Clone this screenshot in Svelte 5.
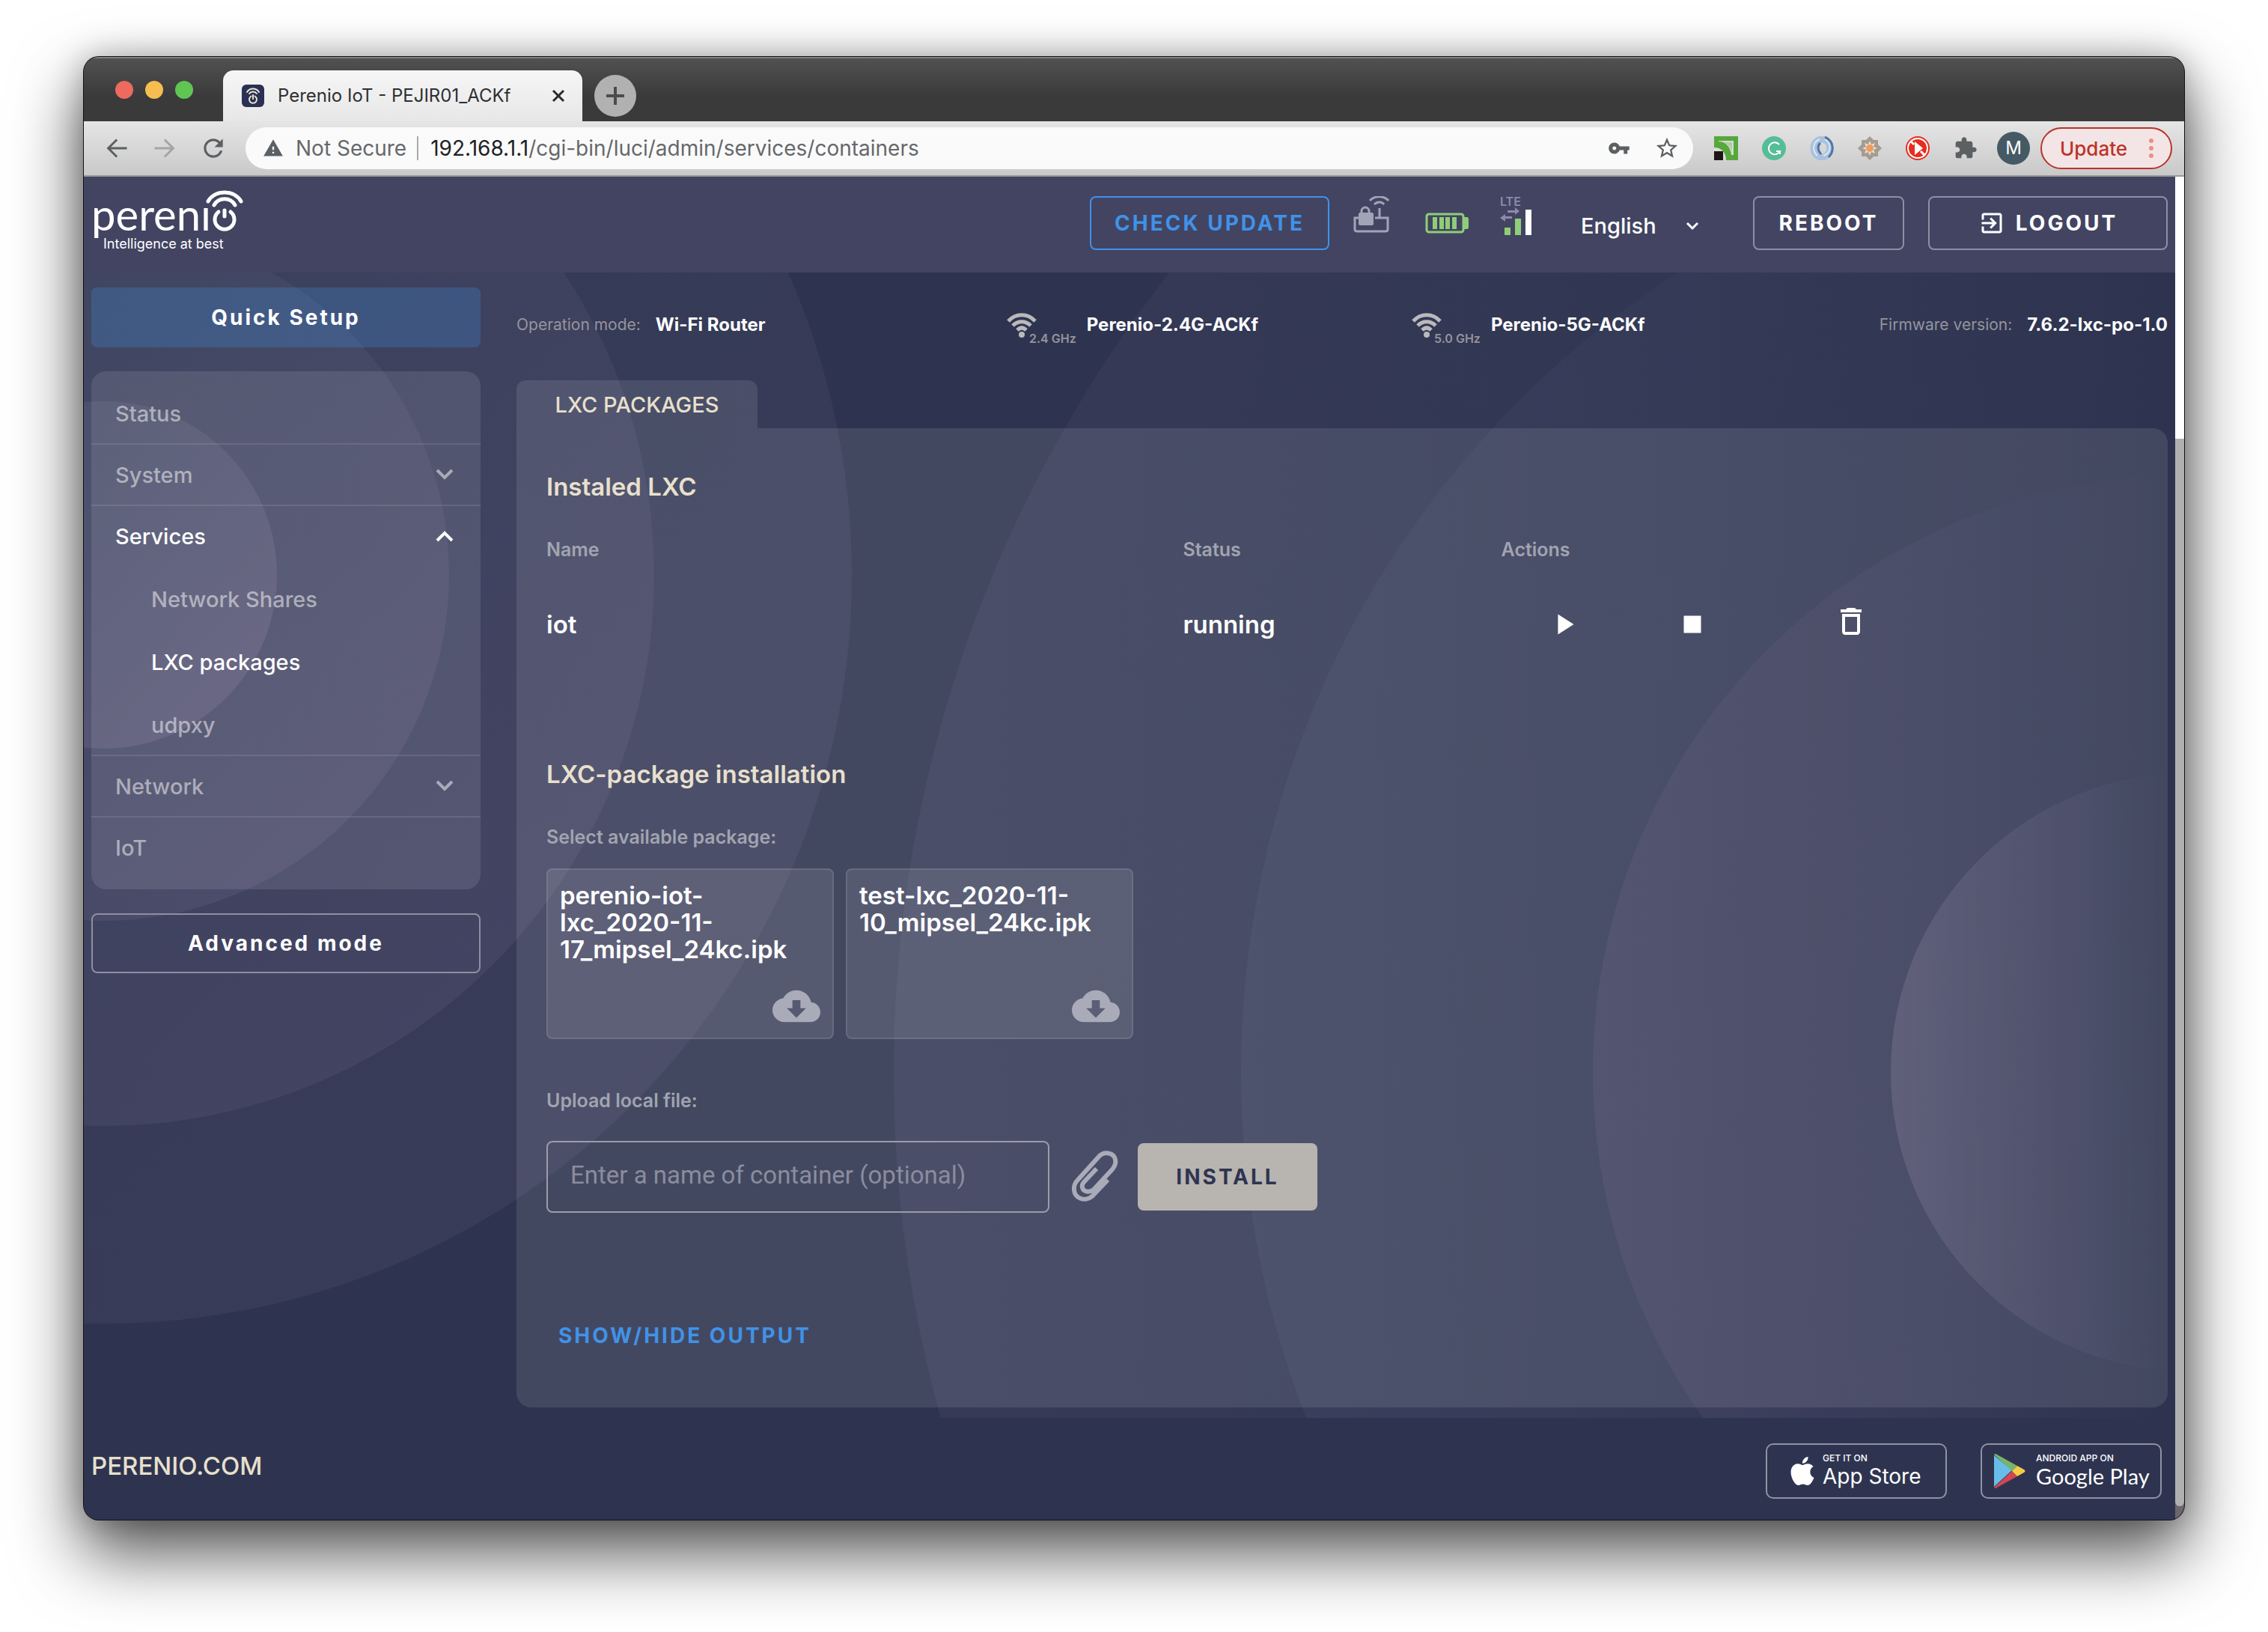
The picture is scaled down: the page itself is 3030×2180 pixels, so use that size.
<script>
  const packages = [
    'perenio-iot-lxc_2020-11-17_mipsel_24kc.ipk',
    'test-lxc_2020-11-10_mipsel_24kc.ipk'
  ];
  const containers = [{ name: 'iot', status: 'running' }];
  const networks = [
    { band: '2.4 GHz', ssid: 'Perenio-2.4G-ACKf' },
    { band: '5.0 GHz', ssid: 'Perenio-5G-ACKf' }
  ];
  const menu = [
    { label: 'Status' },
    { label: 'System', arrow: 'down' },
    {
      label: 'Services',
      arrow: 'up',
      active: true,
      children: [
        { label: 'Network Shares' },
        { label: 'LXC packages', active: true },
        { label: 'udpxy' }
      ]
    },
    { label: 'Network', arrow: 'down' },
    { label: 'IoT' }
  ];
</script>

<div class="window">
  <div class="tabstrip">
    <div class="lights"><i class="red"></i><i class="yellow"></i><i class="green"></i></div>
    <div class="tab">
      <svg class="favicon" viewBox="0 0 30 30" aria-hidden="true">
        <rect width="30" height="30" rx="6" fill="#2a3155" />
        <g fill="none" stroke="#efe6d2" stroke-width="2" stroke-linecap="round">
          <path d="M7 10a9.500 9.500 0 0 1 16 0M10 12a6.200 6.200 0 0 1 10 0M15 14v5" />
          <path d="M12.500 15.500a5 5 0 1 0 5 0" />
        </g>
      </svg>
      <span class="tab-title">Perenio IoT - PEJIR01_ACKf</span>
      <button class="plain tab-close" aria-label="Close tab">
        <svg width="18" height="18" viewBox="0 0 18 18"><path d="M2 2l14 14M16 2L2 16" stroke="#2b2b2e" stroke-width="3" /></svg>
      </button>
    </div>
    <button class="new-tab" aria-label="New tab">
      <svg width="24" height="24" viewBox="0 0 24 24"><path d="M12 0v24M0 12h24" stroke="#4c4c4c" stroke-width="4" /></svg>
    </button>
  </div>

  <div class="toolbar">
    <div class="nav">
      <button class="plain" aria-label="Back"><svg width="36" height="36" viewBox="0 0 24 24" fill="#5c6063"><path d="M21 11H6.800l6-6-1.400-1.400L3 12l8.400 8.400 1.400-1.400-6-6H21z" /></svg></button>
      <button class="plain" aria-label="Forward"><svg width="36" height="36" viewBox="0 0 24 24" fill="#a3a5a6"><path d="M3 11h14.200l-6-6 1.400-1.400L21 12l-8.400 8.400-1.400-1.400 6-6H3z" /></svg></button>
      <button class="plain" aria-label="Reload"><svg width="38" height="38" viewBox="0 0 24 24" fill="#5c6063"><path d="M17.650 6.350C16.200 4.900 14.210 4 12 4c-4.420 0-7.990 3.580-7.990 8s3.570 8 7.990 8c3.730 0 6.840-2.550 7.730-6h-2.080c-.820 2.330-3.040 4-5.650 4-3.310 0-6-2.690-6-6s2.690-6 6-6c1.660 0 3.140.690 4.220 1.780L13 11h7V4l-2.350 2.350z" /></svg></button>
    </div>
    <div class="omnibox">
      <svg width="28" height="28" viewBox="0 0 24 24" fill="#5c6063"><path d="M1 21h22L12 2 1 21zm12-3h-2v-2h2v2zm0-4h-2v-4h2v4z" /></svg>
      <span class="insecure">Not Secure</span>
      <span class="url"><b>192.168.1.1</b>/cgi-bin/luci/admin/services/containers</span>
      <button class="plain" aria-label="Passwords"><svg width="30" height="30" viewBox="0 0 24 24" fill="#5c6063"><path d="M12.650 10C11.830 7.670 9.610 6 7 6c-3.310 0-6 2.690-6 6s2.690 6 6 6c2.610 0 4.830-1.670 5.650-4H17v4h4v-4h2v-4H12.650zM7 14c-1.100 0-2-.9-2-2s.9-2 2-2 2 .9 2 2-.9 2-2 2z" /></svg></button>
      <button class="plain" aria-label="Bookmark"><svg width="34" height="34" viewBox="0 0 24 24" fill="#5c6063"><path d="M22 9.240l-7.190-.620L12 2 9.190 8.630 2 9.240l5.460 4.730L5.820 21 12 17.270 18.180 21l-1.630-7.030L22 9.240zM12 15.400l-3.760 2.270 1-4.280-3.320-2.880 4.380-.380L12 6.100l1.710 4.040 4.380.380-3.320 2.880 1 4.280L12 15.400z" /></svg></button>
    </div>
    <div class="extensions">
      <svg viewBox="0 0 32 32"><path d="M0 0h32v32H0z" fill="#56a83c" /><path d="M6 6h20v19h-3C22 14 15 7 6 7z" fill="#d5dbd1" /><path d="M12 8h12v12C22 14 18 10 12 8z" fill="#b4c9ab" /><path d="M0 15c10 0 16 7 16 17H0z" fill="#dcdcda" /><path d="M0 20h12v12H0z" fill="#1c1714" /></svg>
      <svg viewBox="0 0 32 32"><circle cx="16" cy="16" r="16" fill="#55bd98" /><path d="M23 11a8 8 0 1 0 1 9h-5m5-1v5" fill="none" stroke="#fff" stroke-width="2" /></svg>
      <svg viewBox="0 0 32 32"><ellipse cx="16" cy="16" rx="11" ry="12" fill="none" stroke="#a9c1de" stroke-width="9" /><path d="M20 1c12 5 13 19 5 27M14 9c-5 4-3 11 1 15" fill="none" stroke="#4f77a9" stroke-width="3" /><path d="M20 4C31 11 27 23 18 26M13 4C3 8 3 20 10 26" fill="none" stroke="#dbe7f4" stroke-width="2" /></svg>
      <svg viewBox="0 0 32 32"><path d="M16 0l5 5h6v6l5 5-5 5v6h-6l-5 5-5-5H5v-6l-5-5 5-5V5h6z" fill="#a59c90" /><path d="M16 6l2 5 5-2-2 5 5 2-5 2 2 5-5-2-2 5-2-5-5 2 2-5-5-2 5-2-2-5 5 2z" fill="#e3dfd9" /><circle cx="16" cy="16" r="5" fill="#f29a5c" /></svg>
      <svg viewBox="0 0 32 32"><circle cx="16" cy="16" r="16" fill="#e52d20" /><circle cx="16" cy="16" r="13" fill="none" stroke="#fff" stroke-width="2" /><path d="M7 7l4 4M20 20l5 5" stroke="#fff" stroke-width="3" /><path d="M12 7l11 9-11 9z" fill="#fff" /></svg>
      <svg viewBox="0 0 24 24"><path fill="#5c6063" d="M20.500 11H19V7c0-1.100-.9-2-2-2h-4V3.500C13 2.120 11.880 1 10.500 1S8 2.120 8 3.500V5H4c-1.100 0-1.990.9-1.990 2v3.800H3.500c1.490 0 2.700 1.210 2.700 2.700s-1.210 2.700-2.700 2.700H2V20c0 1.100.9 2 2 2h3.800v-1.500c0-1.490 1.210-2.700 2.700-2.700 1.490 0 2.700 1.210 2.700 2.700V22H17c1.100 0 2-.9 2-2v-4h1.500c1.380 0 2.500-1.120 2.500-2.500S21.880 11 20.500 11z" /></svg>
    </div>
    <button class="avatar" aria-label="Profile M">M</button>
    <button class="update">Update
      <svg width="8" height="28" viewBox="0 0 8 28" fill="#ee8f83"><circle cx="4" cy="4" r="3" /><circle cx="4" cy="14" r="3" /><circle cx="4" cy="24" r="3" /></svg>
    </button>
  </div>

  <div class="viewport">
    <div class="page">
      <header>
        <a class="logo" href="/">
          <span class="brand">
            <span class="wordmark">perenı</span>
            <svg class="power" width="44" height="60" viewBox="0 0 44 60" fill="none" stroke="#fff" stroke-width="5" stroke-linecap="round" aria-hidden="true">
              <path d="M-4 17C5 1 31 1 40 17M4 22C10 11 26 11 32 22" />
              <path d="M10 31a13 13 0 1 0 16 0M18 29v8" />
            </svg>
          </span>
          <span class="tagline">Intelligence at best</span>
        </a>
        <button class="outline check">CHECK UPDATE</button>
        <div class="indicators">
          <svg width="48" height="50" viewBox="0 0 48 50" fill="none" stroke="#a3a3b7" stroke-width="3">
            <path d="M22 6C28-1 41-1 47 6M28 11C32 7 38 7 41 11M35 16v14M7 29H2v15q0 3 3 3h38q3 0 3-3V29H29" />
            <path d="M11 23v-3a5 5 0 0 1 10 0v3" /><rect x="7" y="22" width="20" height="17" rx="2" fill="#a3a3b7" stroke="none" />
          </svg>
          <svg class="battery" width="58" height="28" viewBox="0 0 58 28" fill="#8fcd78">
            <rect x="2" y="2" width="49" height="24" rx="3" fill="none" stroke="#8fcd78" stroke-width="3" />
            <path d="M52 6h4q2 0 2 3v10q0 3-2 3h-4zM10 6h6v16h-6zM19 6h6v16h-6zM27 6h6v16h-6zM36 6h6v16h-6z" />
          </svg>
          <div class="lte">
            <span>LTE</span>
            <svg width="42" height="38" viewBox="0 0 42 38"><path fill="#8e89ab" d="M10 5h10V1l6 5-6 5V8H10zM16 13H7V10l-7 5 7 5v-4h9z" /><path fill="#8fcd78" d="M6 28h8v10H6zM20 16h8v22h-8z" /><path fill="#fff" d="M34 4h8v34h-8z" /></svg>
          </div>
        </div>
        <label class="language">
          <select aria-label="Language"><option>English</option></select>
          <svg width="18" height="12" viewBox="0 0 18 12"><path d="M2 2l7 7 7-7" fill="none" stroke="#fff" stroke-width="3" /></svg>
        </label>
        <button class="outline reboot">REBOOT</button>
        <button class="outline logout">
          <svg width="36" height="36" viewBox="0 0 24 24" fill="#fff"><path d="M10.090 15.590L11.500 17l5-5-5-5-1.410 1.410L12.670 11H3v2h9.670l-2.580 2.590zM19 3H5c-1.110 0-2 .9-2 2v4h2V5h14v14H5v-4H3v4c0 1.100.890 2 2 2h14c1.100 0 2-.9 2-2V5c0-1.100-.9-2-2-2z" /></svg>
          LOGOUT
        </button>
      </header>

      <div class="content">
        <svg class="waves left" width="1140" height="1410" viewBox="0 0 1140 1410" aria-hidden="true">
          <defs>
            <linearGradient id="wl" x1="0" y1="0" x2="1" y2="1">
              <stop offset="0" stop-color="#8d84a4" stop-opacity="0.500" />
              <stop offset="0.350" stop-color="#7f85a0" stop-opacity="0.550" />
              <stop offset="1" stop-color="#9277a3" />
            </linearGradient>
          </defs>
          <g fill="url(#wl)">
            <circle cx="26" cy="404" r="1000" opacity="0.120" />
            <circle cx="26" cy="404" r="736" opacity="0.150" />
            <circle cx="26" cy="404" r="462" opacity="0.170" />
            <circle cx="26" cy="404" r="232" opacity="0.280" />
          </g>
        </svg>
        <svg class="waves right" width="1732" height="1530" viewBox="0 0 1732 1530" aria-hidden="true">
          <defs>
            <linearGradient id="wr" gradientUnits="userSpaceOnUse" x1="0" y1="0" x2="1720" y2="0">
              <stop offset="0" stop-color="#8a7aa3" /><stop offset="1" stop-color="#8a7aa3" stop-opacity="0" />
            </linearGradient>
            <linearGradient id="wr2" gradientUnits="userSpaceOnUse" x1="464" y1="0" x2="1720" y2="0">
              <stop offset="0" stop-color="#6f8fa8" /><stop offset="1" stop-color="#8a7aa3" stop-opacity="0" />
            </linearGradient>
            <linearGradient id="wr3" gradientUnits="userSpaceOnUse" x1="934" y1="0" x2="1720" y2="0">
              <stop offset="0" stop-color="#9277a3" /><stop offset="1" stop-color="#9277a3" stop-opacity="0" />
            </linearGradient>
            <linearGradient id="wr4" gradientUnits="userSpaceOnUse" x1="1332" y1="0" x2="1720" y2="0">
              <stop offset="0" stop-color="#9a8cae" /><stop offset="1" stop-color="#9a8cae" stop-opacity="0" />
            </linearGradient>
          </defs>
          <circle cx="1752" cy="1068" r="1732" fill="url(#wr)" opacity="0.090" />
          <circle cx="1752" cy="1068" r="1268" fill="url(#wr2)" opacity="0.090" />
          <circle cx="1752" cy="1068" r="798" fill="url(#wr3)" opacity="0.120" />
          <circle cx="1752" cy="1068" r="400" fill="url(#wr4)" opacity="0.250" />
        </svg>

        <div class="columns">
          <aside>
            <button class="quick">Quick Setup</button>
            <nav>
              <ul>
                {#each menu as item}
                  <li>
                    <a href="/" class:active={item.active}>
                      {item.label}
                      {#if item.arrow}
                        <svg width="24" height="16" viewBox="0 0 24 16" fill="none" stroke="currentColor" stroke-width="4">
                          <path d={item.arrow === 'up' ? 'M2 14L12 4l10 10' : 'M2 2l10 10L22 2'} />
                        </svg>
                      {/if}
                    </a>
                    {#if item.children}
                      <ul class="sub">
                        {#each item.children as child}
                          <li><a href="/" class:active={child.active}>{child.label}</a></li>
                        {/each}
                      </ul>
                    {/if}
                  </li>
                {/each}
              </ul>
            </nav>
            <button class="outline advanced">Advanced mode</button>
          </aside>

          <main>
            <div class="info">
              <div><span class="hint">Operation mode:</span><strong>Wi-Fi Router</strong></div>
              {#each networks as net}
                <div class="wifi">
                  <svg width="40" height="34" viewBox="0 0 40 34" fill="none" stroke="#bab9bb" stroke-width="5">
                    <path d="M2 11C12 0 28 0 38 11M8 17c7-7 17-7 24 0M14 23c4-4 8-4 12 0" /><circle cx="20" cy="29" r="4" fill="#bab9bb" stroke="none" />
                  </svg>
                  <span class="band">{net.band}</span><strong>{net.ssid}</strong>
                </div>
              {/each}
              <div class="firmware"><span class="hint">Firmware version:</span><strong>7.6.2-lxc-po-1.0</strong></div>
            </div>

            <div class="tabs"><button class="page-tab">LXC PACKAGES</button></div>
            <section class="panel">
              <h2>Instaled LXC</h2>
              <table>
                <thead><tr><th class="c-name">Name</th><th class="c-status">Status</th><th>Actions</th></tr></thead>
                <tbody>
                  {#each containers as c}
                    <tr>
                      <td>{c.name}</td>
                      <td>{c.status}</td>
                      <td>
                        <div class="actions">
                          <button class="plain" aria-label="Start"><svg width="46" height="46" viewBox="0 0 24 24" fill="#fff"><path d="M7 5v14l11-7z" /></svg></button>
                          <button class="plain" aria-label="Stop"><svg width="46" height="46" viewBox="0 0 24 24" fill="#fff"><path d="M6 6h12v12H6z" /></svg></button>
                          <button class="plain" aria-label="Delete"><svg width="48" height="48" viewBox="0 2 24 24" fill="#fff"><path d="M6 19c0 1.100.9 2 2 2h8c1.100 0 2-.9 2-2V7H6v12zM8 9h8v10H8V9zm7.500-5l-1-1h-5l-1 1H5v2h14V4h-3.500z" /></svg></button>
                        </div>
                      </td>
                    </tr>
                  {/each}
                </tbody>
              </table>

              <h2 class="second">LXC-package installation</h2>
              <p class="label">Select available package:</p>
              <div class="packages">
                {#each packages as pkg}
                  <button class="package">
                    <span>{pkg}</span>
                    <svg width="64" height="44" viewBox="0 4 24 16" fill="#a9abb9"><path d="M19.350 10.040C18.670 6.590 15.640 4 12 4 9.110 4 6.600 5.640 5.350 8.040 2.340 8.360 0 10.910 0 14c0 3.310 2.690 6 6 6h13c2.760 0 5-2.240 5-5 0-2.640-2.050-4.780-4.650-4.960zM16.800 13L12 17.800 7.200 13H10V9h4v4h2.800z" /></svg>
                  </button>
                {/each}
              </div>

              <label class="label upload-label" for="container-name">Upload local file:</label>
              <div class="upload">
                <input id="container-name" type="text" placeholder="Enter a name of container (optional)" />
                <button class="plain clip" aria-label="Attach file">
                  <svg width="62" height="70" viewBox="0 0 62 70" fill="none" stroke="#a9abb9" stroke-width="6"><path d="M48 39L27 61C18 69 2 64 3 50c0-5 2-8 5-11L36 8c6-7 17-6 21 1 3 6 1 11-3 16L30 51c-6 6-15 4-16-2-1-3 1-6 3-8l16-17" /></svg>
                </button>
                <button class="install">INSTALL</button>
              </div>
              <button class="plain toggle">SHOW/HIDE OUTPUT</button>
            </section>
          </main>
        </div>

        <footer>
          <a class="site" href="/">PERENIO.COM</a>
          <a class="store apple" href="/">
            <svg width="38" height="38" viewBox="0 0 24 24" fill="#fff"><path d="M12.152 6.896c-.948 0-2.415-1.078-3.960-1.040-2.040.027-3.910 1.183-4.961 3.014-2.117 3.675-.546 9.103 1.519 12.090 1.013 1.454 2.208 3.090 3.792 3.039 1.520-.065 2.090-.987 3.935-.987 1.831 0 2.350.987 3.960.948 1.637-.026 2.676-1.480 3.676-2.948 1.156-1.688 1.636-3.325 1.662-3.415-.039-.013-3.182-1.221-3.220-4.857-.026-3.040 2.480-4.494 2.597-4.559-1.429-2.090-3.623-2.324-4.390-2.376-2-.156-3.675 1.090-4.610 1.090zM15.530 3.830c.843-1.012 1.400-2.427 1.245-3.830-1.207.052-2.662.805-3.532 1.818-.780.896-1.454 2.338-1.273 3.714 1.338.104 2.715-.688 3.559-1.701" /></svg>
            <span><small>GET IT ON</small>App Store</span>
          </a>
          <a class="store google" href="/">
            <svg width="42" height="46" viewBox="0 0 42 46"><path d="M0 2v42l24-22z" fill="#68bde8" /><path d="M0 1q1-2 4 0l27 15-7 7z" fill="#78b56b" /><path d="M0 45q1 2 4 0l27-15-7-7z" fill="#d14654" /><path d="M31 16l9 5q3 2 0 4l-9 5-7-7z" fill="#f6cc46" /></svg>
            <span><small>ANDROID APP ON</small>Google Play</span>
          </a>
        </footer>
      </div>
    </div>
    <div class="scrollbar"><i></i></div>
  </div>
</div>

<style>
  :global(body) {
    background: #fff;
  }
  * {
    box-sizing: border-box;
  }
  button,
  input,
  select {
    font: inherit;
    color: inherit;
    margin: 0;
  }
  button {
    cursor: pointer;
  }
  a {
    color: inherit;
    text-decoration: none;
  }
  svg {
    display: block;
    flex: none;
  }
  .plain {
    border: 0;
    padding: 0;
    background: none;
    display: flex;
  }
  .window {
    margin: 76px 112px 148px;
    border-radius: 20px;
    overflow: hidden;
    background: #2e3450;
    box-shadow:
      0 0 0 1px #111,
      0 0 40px rgba(0, 0, 0, 0.25),
      0 42px 90px 4px rgba(0, 0, 0, 0.66);
    font-family: Inter, 'Liberation Sans', sans-serif;
  }

  .tabstrip {
    display: flex;
    height: 86px;
    align-items: flex-end;
    background: linear-gradient(#515151, #3a3a3a 60%);
    border-top: 2px solid #80827f;
  }
  .lights {
    display: flex;
    gap: 16px;
    width: 186px;
    padding: 0 0 30px 42px;
  }
  .lights i {
    width: 24px;
    height: 24px;
    border-radius: 50%;
  }
  .red {
    background: #ed6a5e;
  }
  .yellow {
    background: #f5be4f;
  }
  .green {
    background: #61c554;
  }
  .tab {
    display: flex;
    align-items: center;
    width: 480px;
    height: 68px;
    padding: 0 23px 0 25px;
    border-radius: 14px 14px 0 0;
    background: linear-gradient(#f6f6f6, #e7e7e7);
  }
  .favicon {
    width: 30px;
    height: 30px;
  }
  .tab-title {
    flex: 1;
    margin-left: 18px;
    font-size: 24px;
    line-height: 32px;
    color: #2e2f33;
    white-space: nowrap;
  }
  .new-tab {
    display: flex;
    align-items: center;
    justify-content: center;
    width: 56px;
    height: 56px;
    margin: 0 0 6px 16px;
    padding: 0;
    border: 0;
    border-radius: 50%;
    background: #b1b1b1;
  }
  .toolbar {
    display: flex;
    align-items: center;
    height: 74px;
    padding: 0 16px 0 26px;
    background: linear-gradient(#e5e5e5, #c9c9c9);
    border-bottom: 2px solid #999b98;
  }
  .nav {
    display: flex;
    align-items: center;
    gap: 28px;
    width: 190px;
  }
  .omnibox {
    display: flex;
    align-items: center;
    flex: 1;
    height: 56px;
    padding: 0 18px 0 23px;
    border-radius: 28px;
    background: #fafafa;
    font-size: 28px;
    line-height: 36px;
    color: #66686b;
    white-space: nowrap;
  }
  .insecure {
    margin-left: 16px;
    padding-right: 14px;
    border-right: 2px solid #a9aaab;
    line-height: 32px;
  }
  .url {
    flex: 1;
    margin-left: 16px;
  }
  .url b {
    font-weight: 400;
    color: #202124;
  }
  .omnibox .plain + .plain {
    margin-left: 32px;
  }
  .extensions {
    display: flex;
    align-items: center;
    gap: 32px;
    margin: 0 26px 0 28px;
  }
  .extensions svg {
    width: 32px;
    height: 32px;
  }
  .avatar {
    width: 44px;
    height: 44px;
    padding: 0;
    border: 0;
    border-radius: 50%;
    background: #455a64;
    color: #fff;
    font-size: 24px;
    line-height: 44px;
  }
  .update {
    display: flex;
    align-items: center;
    justify-content: space-between;
    width: 176px;
    height: 56px;
    margin-left: 14px;
    padding: 0 22px 0 24px;
    border: 2px solid #bc3329;
    border-radius: 28px;
    background: #f3e5e5;
    color: #bc3329;
    font-size: 26px;
    font-weight: 500;
  }

  .viewport {
    display: flex;
  }
  .page {
    flex: 1;
    min-width: 0;
    color: #fff;
  }
  .scrollbar {
    display: flex;
    flex-direction: column;
    width: 12px;
    padding-bottom: 18px;
    background: linear-gradient(#fff 80%, #6c676c 80%);
  }
  .scrollbar i {
    flex: 1;
    margin-top: 350px;
    border-radius: 0 0 6px 6px;
    background: #b0b0b0;
  }

  header {
    display: flex;
    align-items: flex-start;
    min-height: 128px;
    padding: 26px 10px 0;
    background: #424462;
  }
  .outline {
    height: 72px;
    border: 2px solid #8e8fa1;
    border-radius: 8px;
    background: none;
    font-size: 28px;
    font-weight: 700;
    line-height: 36px;
    letter-spacing: 3px;
    padding: 0;
  }
  .logo {
    flex: 1;
    display: flex;
    flex-direction: column;
    margin-top: -10px;
  }
  .brand {
    display: flex;
    align-items: flex-end;
    height: 64px;
  }
  .wordmark {
    font-family: Lato, sans-serif;
    font-size: 58px;
    line-height: 60px;
  }
  .power {
    align-self: flex-start;
    overflow: visible;
  }
  .tagline {
    margin-left: 16px;
    font-size: 18px;
    line-height: 20px;
  }
  .check {
    width: 320px;
    border-color: #4092e8;
    color: #4092e8;
  }
  .indicators {
    display: flex;
    align-items: flex-start;
    margin: 0 66px 0 32px;
  }
  .battery {
    margin: 22px 42px 0 48px;
  }
  .lte span {
    display: block;
    font-size: 16px;
    font-weight: 600;
    line-height: 14px;
    color: #8e89ab;
  }
  .language {
    display: flex;
    align-items: center;
    height: 80px;
    margin-right: 72px;
  }
  .language select {
    width: 140px;
    padding: 0;
    border: 0;
    appearance: none;
    background: none;
    font-size: 29px;
    font-weight: 500;
    line-height: 36px;
  }
  .reboot {
    width: 202px;
    margin-right: 32px;
  }
  .logout {
    display: flex;
    align-items: center;
    justify-content: center;
    gap: 14px;
    width: 320px;
  }

  .content {
    position: relative;
    padding: 20px 10px 28px;
    background: #2e3450;
  }
  .waves {
    position: absolute;
    top: 0;
  }
  .left {
    left: 0;
  }
  .right {
    right: 0;
  }
  .columns {
    position: relative;
    display: flex;
    gap: 48px;
  }
  aside {
    width: 520px;
    flex: none;
  }
  .quick {
    display: block;
    width: 100%;
    height: 80px;
    border: 0;
    border-radius: 8px;
    background: rgba(64, 146, 232, 0.25);
    font-size: 28px;
    font-weight: 700;
    letter-spacing: 3px;
  }
  nav {
    margin: 32px 0;
    padding: 16px 0;
    border-radius: 20px;
    background: rgba(255, 255, 255, 0.1);
  }
  ul {
    list-style: none;
    margin: 0;
    padding: 0;
  }
  nav > ul > li + li {
    border-top: 2px solid rgba(255, 255, 255, 0.1);
  }
  nav a {
    display: flex;
    align-items: center;
    justify-content: space-between;
    height: 80px;
    padding: 0 36px 0 32px;
    font-size: 29px;
    font-weight: 500;
    color: rgba(255, 255, 255, 0.5);
  }
  nav a.active {
    color: #fff;
  }
  .sub a {
    height: 84px;
    padding: 4px 32px 0 80px;
  }
  .advanced {
    display: block;
    width: 100%;
    height: 80px;
  }

  main {
    flex: 1;
    min-width: 0;
  }
  .info {
    display: grid;
    grid-template-columns: 655fr 541fr 541fr 469fr;
    height: 124px;
    padding-top: 32px;
    align-items: start;
    font-size: 24px;
    line-height: 36px;
  }
  .info > div {
    display: flex;
    align-items: center;
    white-space: nowrap;
  }
  .info strong {
    font-weight: 700;
  }
  .hint {
    margin-right: 20px;
    font-size: 21px;
    color: #95949c;
  }
  .info .wifi svg {
    margin-top: 2px;
  }
  .band {
    margin: 36px 14px 0 -10px;
    font-size: 16px;
    font-weight: 600;
    line-height: 20px;
    color: #95949c;
  }
  .info .wifi {
    height: 36px;
  }
  .info .firmware {
    justify-content: flex-end;
  }
  .tabs {
    display: flex;
  }
  .page-tab {
    width: 322px;
    height: 64px;
    padding: 0;
    border: 0;
    border-radius: 12px 12px 0 0;
    background: rgba(255, 255, 255, 0.1);
    color: #e8e0cd;
    font-size: 29px;
    font-weight: 500;
  }
  .panel {
    padding: 58px 40px 76px;
    border-radius: 0 20px 20px 20px;
    background: rgba(255, 255, 255, 0.1);
  }
  h2 {
    margin: 0;
    font-size: 33px;
    font-weight: 600;
    line-height: 40px;
    color: #e8e0cd;
  }
  table {
    width: 100%;
    margin-top: 48px;
    table-layout: fixed;
    border-collapse: collapse;
    text-align: left;
  }
  th {
    padding: 0 0 60px;
    font-size: 25px;
    font-weight: 600;
    line-height: 32px;
    color: #a1a4b1;
  }
  .c-name {
    width: 40%;
  }
  .c-status {
    width: 20%;
  }
  td {
    padding: 0;
    font-size: 33px;
    font-weight: 600;
    line-height: 48px;
  }
  .actions {
    display: grid;
    grid-template-columns: 20% 20% 30%;
    align-items: center;
    justify-items: center;
  }
  .second {
    margin-top: 156px;
  }
  .label {
    display: block;
    margin: 48px 0 0;
    font-size: 25px;
    font-weight: 600;
    line-height: 32px;
    color: #a1a4b1;
  }
  .packages {
    display: flex;
    gap: 16px;
    margin-top: 26px;
  }
  .package {
    display: flex;
    flex-direction: column;
    justify-content: space-between;
    width: 384px;
    min-height: 228px;
    padding: 16px 16px 20px;
    border: 2px solid rgba(255, 255, 255, 0.1);
    border-radius: 8px;
    background: rgba(255, 255, 255, 0.1);
    font-size: 33px;
    font-weight: 600;
    line-height: 36px;
    text-align: left;
  }
  .package span {
    padding-right: 16px;
  }
  .package svg {
    align-self: flex-end;
  }
  .upload-label {
    margin-top: 66px;
  }
  .upload {
    display: flex;
    align-items: center;
    margin-top: 38px;
  }
  input {
    width: 672px;
    height: 96px;
    padding: 0 30px 6px;
    border: 2px solid #9a9cab;
    border-radius: 8px;
    background: none;
    font-family: Roboto, sans-serif;
    font-size: 33px;
  }
  input::placeholder {
    color: #8a8d9e;
    opacity: 1;
  }
  .clip {
    margin: 0 26px 0 30px;
  }
  .install {
    width: 240px;
    height: 90px;
    border: 0;
    border-radius: 8px;
    background: #b8b4b0;
    color: #2e3450;
    font-size: 28px;
    font-weight: 700;
    letter-spacing: 3px;
  }
  .toggle {
    margin: 144px 0 0 16px;
    color: #4092e8;
    font-size: 28px;
    font-weight: 700;
    line-height: 40px;
    letter-spacing: 3px;
  }

  footer {
    position: relative;
    display: flex;
    gap: 45px;
    margin-top: 48px;
    padding-right: 8px;
  }
  .site {
    flex: 1;
    padding-top: 10px;
    font-size: 33px;
    font-weight: 500;
    line-height: 40px;
    color: #e8e0cd;
  }
  .store {
    display: flex;
    align-items: center;
    width: 242px;
    height: 74px;
    border: 2px solid #8f92a2;
    border-radius: 10px;
    font-size: 29px;
    line-height: 34px;
    white-space: nowrap;
  }
  .store span {
    display: flex;
    flex-direction: column;
  }
  .store small {
    font-size: 12px;
    line-height: 14px;
    font-weight: 500;
  }
  .apple {
    gap: 8px;
    padding-left: 28px;
    font-size: 28px;
  }
  .google {
    gap: 14px;
    padding-left: 16px;
    font-family: Lato, sans-serif;
  }
  .google small {
    font-family: Inter, sans-serif;
  }
</style>
